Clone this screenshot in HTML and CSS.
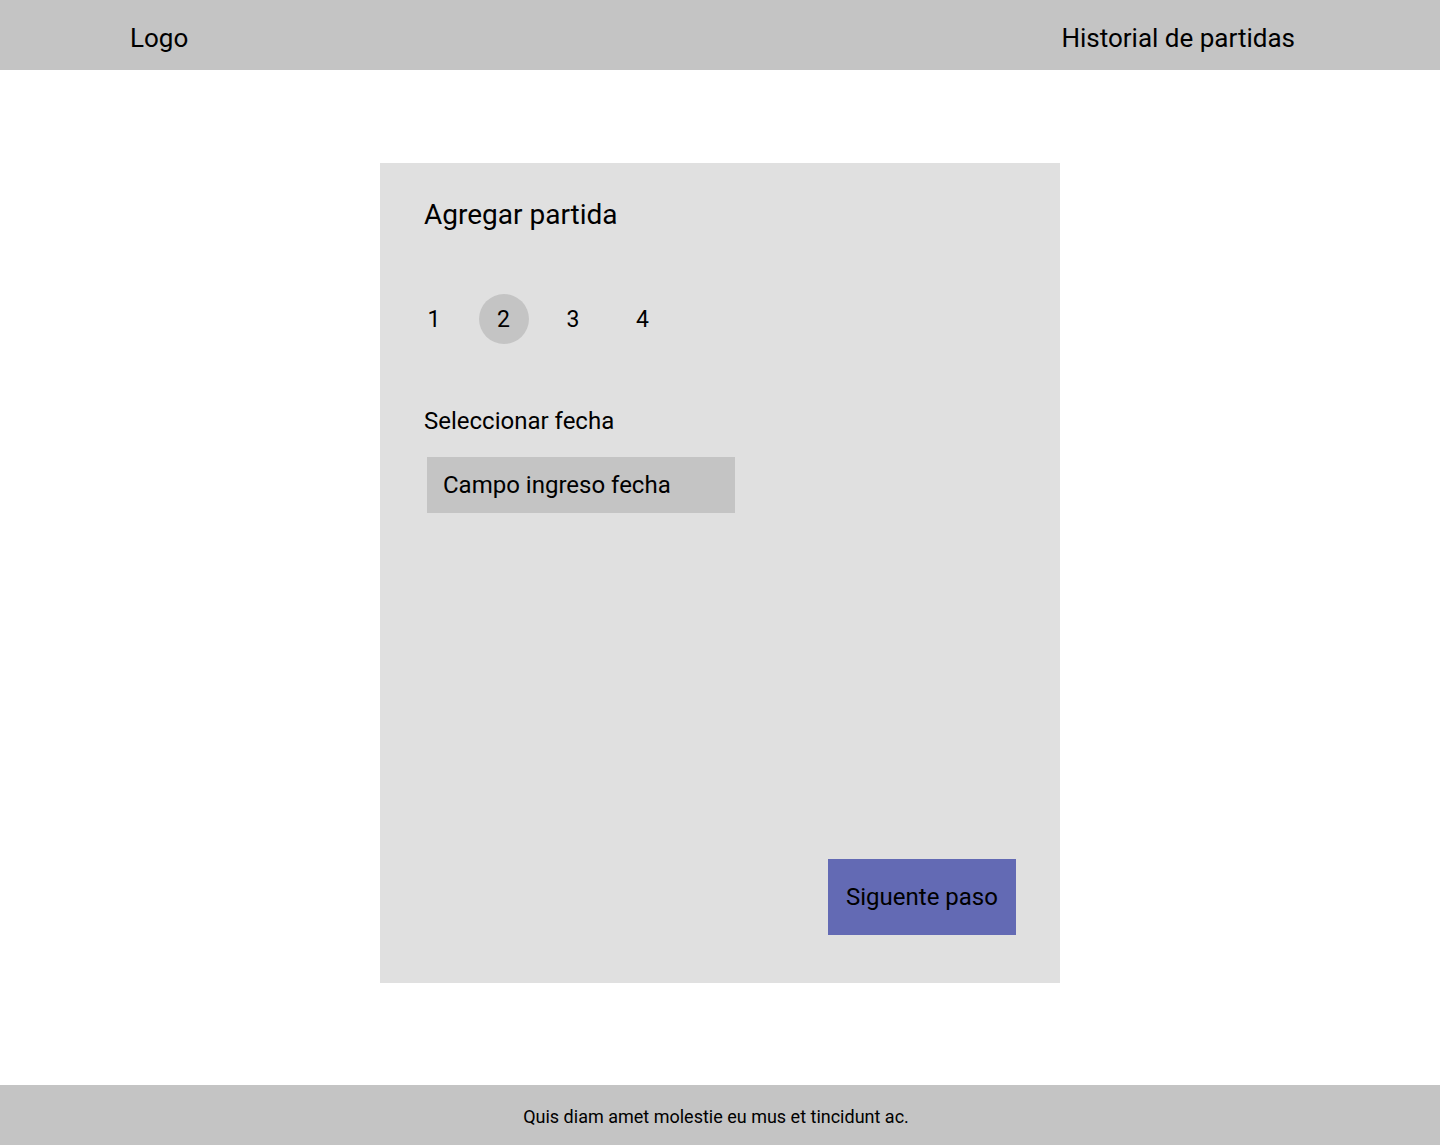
FILE: index.html
```html
<!DOCTYPE html>
<html lang="es">
<head>
<meta charset="utf-8">
<title>Agregar partida</title>
<link rel="stylesheet" href="styles.css">
</head>
<body>
<header class="topbar">
  <div class="logo">Logo</div>
  <nav class="nav"><a class="nav-link" href="#">Historial de partidas</a></nav>
</header>
<main class="main">
  <section class="card">
    <h1 class="card-title">Agregar partida</h1>
    <ol class="steps">
      <li class="step">1</li>
      <li class="step step-active">2</li>
      <li class="step">3</li>
      <li class="step">4</li>
    </ol>
    <label class="field-label">Seleccionar fecha</label>
    <div class="field">Campo ingreso fecha</div>
    <div class="actions">
      <button class="btn-next">Siguente paso</button>
    </div>
  </section>
</main>
<footer class="footer">
  <p class="footer-text">Quis diam amet molestie eu mus et tincidunt ac.</p>
</footer>
</body>
</html>
```

FILE: styles.css
```css
* { box-sizing: border-box; }
html, body {
  margin: 0;
  padding: 0;
}
body {
  font-family: Roboto, "Liberation Sans", sans-serif;
  color: #000;
  background: #fff;
  display: flex;
  flex-direction: column;
  min-height: 1145px;
}
.topbar {
  height: 70px;
  background: #c4c4c4;
  display: flex;
  align-items: center;
  justify-content: space-between;
  padding: 6px 145px 0 130px;
}
.logo {
  font-size: 26px;
  line-height: 30px;
}
.nav-link {
  font-size: 26px;
  line-height: 30px;
  color: #000;
  text-decoration: none;
}
.main {
  flex: 1;
  display: flex;
  justify-content: center;
  align-items: flex-start;
  padding: 93px 0 102px;
}
.card {
  width: 680px;
  height: 820px;
  background: #e0e0e0;
  padding: 35px 44px 48px 44px;
  display: flex;
  flex-direction: column;
}
.card-title {
  margin: 0;
  font-size: 28px;
  line-height: 33px;
  font-weight: 400;
}
.steps {
  list-style: none;
  margin: 63px 0 0 -15px;
  padding: 0;
  display: flex;
  gap: 19.5px;
}
.step {
  width: 50px;
  height: 50px;
  border-radius: 50%;
  display: flex;
  align-items: center;
  justify-content: center;
  font-size: 23px;
}
.step-active {
  background: #c4c4c4;
}
.field-label {
  margin-top: 63px;
  font-size: 24px;
  line-height: 28px;
}
.field {
  margin: 22px 0 0 3px;
  width: 308px;
  height: 56px;
  background: #c4c4c4;
  display: flex;
  align-items: center;
  padding-left: 16px;
  font-size: 24px;
}
.actions {
  margin-top: auto;
  display: flex;
  justify-content: flex-end;
}
.btn-next {
  width: 188px;
  height: 76px;
  border: 0;
  border-radius: 0;
  background: #636ab4;
  color: #000;
  font-family: Roboto, "Liberation Sans", sans-serif;
  font-size: 24px;
  padding: 0;
  cursor: pointer;
}
.footer {
  height: 60px;
  background: #c4c4c4;
  display: flex;
  align-items: center;
  justify-content: center;
  padding: 4px 8px 0 0;
}
.footer-text {
  margin: 0;
  font-size: 18px;
  line-height: 22px;
}
```
